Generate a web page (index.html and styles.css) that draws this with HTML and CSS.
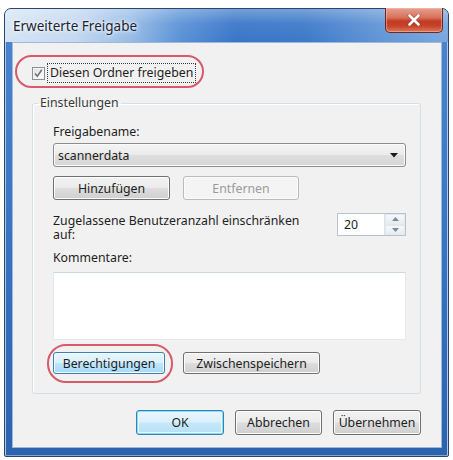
FILE: index.html
```html
<!DOCTYPE html>
<html lang="de">
<head>
<meta charset="utf-8">
<title>Erweiterte Freigabe</title>
<link rel="stylesheet" href="styles.css">
</head>
<body>
<div class="window">
  <div class="titlebar">
    <span class="title">Erweiterte Freigabe</span>
    <button class="close" aria-label="Schließen">
      <svg width="14" height="12" viewBox="0 0 14 12">
        <path d="M2.5 1.5 L11.5 10.5 M11.5 1.5 L2.5 10.5" stroke="#7a2a1e" stroke-width="4" stroke-linecap="round" opacity="0.45"/>
        <path d="M2.5 1.5 L11.5 10.5 M11.5 1.5 L2.5 10.5" stroke="#ffffff" stroke-width="2.6" stroke-linecap="round"/>
      </svg>
    </button>
  </div>
  <div class="client">
    <div class="share-row">
      <span class="checkbox">
        <svg width="11" height="11" viewBox="0 0 11 11">
          <path d="M2 5.5 L4.3 8.2 L8.8 1.8" fill="none" stroke="#6a7486" stroke-width="1.6"/>
        </svg>
      </span>
      <span class="focus">Diesen Ordner freigeben</span>
      <span class="mark mark-share"></span>
    </div>

    <fieldset class="group">
      <legend>Einstellungen</legend>
      <div class="label">Freigabename:</div>
      <div class="combo">
        <span>scannerdata</span>
        <svg class="combo-arrow" width="8" height="5" viewBox="0 0 8 5"><path d="M0 0 H8 L4 4.5 Z" fill="#1a1a1a"/></svg>
      </div>
      <div class="btn-row btn-row-top">
        <button class="btn btn-add">Hinzufügen</button>
        <button class="btn btn-disabled btn-remove" disabled>Entfernen</button>
      </div>
      <div class="limit-row">
        <div class="limit-label">Zugelassene Benutzeranzahl einschränken auf:</div>
        <div class="spin">
          <span class="spin-value">20</span>
          <span class="spin-buttons">
            <span class="spin-btn"><svg width="7" height="4" viewBox="0 0 7 4"><path d="M0 4 L3.5 0 L7 4 Z" fill="#7d8a99"/></svg></span>
            <span class="spin-btn"><svg width="7" height="4" viewBox="0 0 7 4"><path d="M0 0 L3.5 4 L7 0 Z" fill="#7d8a99"/></svg></span>
          </span>
        </div>
      </div>
      <div class="label label-comments">Kommentare:</div>
      <div class="memo"></div>
      <div class="btn-row btn-row-bottom">
        <button class="btn btn-hot btn-perm">Berechtigungen<span class="mark mark-perm"></span></button>
        <button class="btn btn-cache">Zwischenspeichern</button>
      </div>
    </fieldset>

    <div class="actions">
      <button class="btn btn-default btn-ok">OK</button>
      <button class="btn btn-cancel">Abbrechen</button>
      <button class="btn btn-apply">Übernehmen</button>
    </div>
  </div>
</div>
</body>
</html>
```
FILE: styles.css
```css
* { box-sizing: border-box; }

html, body {
  margin: 0;
  padding: 0;
  background: #ffffff;
}

body {
  font-family: "Noto Sans", "Open Sans", sans-serif;
  font-size: 12.3px;
  color: #1e1e1e;
}

.window {
  margin: 8px 0 0 4px;
  width: 445px;
  height: 449px;
  border: 1px solid #2d4566;
  border-radius: 7px 7px 2px 2px;
  background: linear-gradient(180deg, #4c86cf 0%, #3471c0 60%, #2c63ae 100%);
  padding: 0 6px 8px 7px;
  display: flex;
  flex-direction: column;
  box-shadow: inset 1px 0 0 #a9c8ec, inset -1px 0 0 #a9c8ec, inset 0 -1px 0 #7fa6d6;
}

.titlebar {
  height: 33px;
  margin: 0 -6px 0 -7px;
  padding-left: 8px;
  display: flex;
  align-items: flex-start;
  border-radius: 6px 6px 0 0;
  background:
    linear-gradient(180deg, rgba(255,255,255,0.3) 0%, rgba(255,255,255,0.06) 45%, rgba(255,255,255,0) 100%),
    linear-gradient(90deg, #d6e4f4 0%, #c4d8f0 70px, #98bce7 125px, #5a92d6 175px, #3a76c8 230px, #3d79c9 300px, #6497d6 380px, #7aa7de 100%);
}

.title {
  margin-top: 8px;
  font-size: 13.5px;
  line-height: 18px;
  color: #1b2433;
  text-shadow: 0 0 6px #ffffff, 0 0 3px #ffffff;
}

.close {
  margin: -1px 5px 0 auto;
  width: 58px;
  height: 25px;
  padding: 0;
  border: 1px solid #6b2a20;
  border-top: none;
  border-radius: 0 0 5px 5px;
  background: linear-gradient(180deg, #e6a190 0%, #d9705a 40%, #c23b25 55%, #c5432a 75%, #dc7a5a 100%);
  box-shadow: inset 0 0 0 1px rgba(255,200,180,0.45);
  display: flex;
  align-items: center;
  justify-content: center;
}

.client {
  flex: 1;
  background: #f1f1f1;
  border: 1px solid #9fb9da;
  padding: 0 20px 0 19px;
  display: flex;
  flex-direction: column;
}

/* checkbox row */
.share-row {
  position: relative;
  margin-top: 20px;
  height: 20px;
  display: flex;
  align-items: center;
}

.checkbox {
  width: 13px;
  height: 13px;
  border: 1px solid #8e8f8f;
  background: linear-gradient(135deg, #dcdcdc 0%, #f4f4f4 60%, #ffffff 100%);
  box-shadow: inset 0 0 0 1px #f4f4f4;
  display: flex;
  align-items: center;
  justify-content: center;
}

.focus {
  margin-left: 3px;
  padding: 0 2px;
  line-height: 18px;
  outline: 1px dotted #3a3a3a;
  outline-offset: 0;
  white-space: nowrap;
}

.mark {
  position: absolute;
  border: 2px solid #d8596a;
  border-radius: 17px;
  pointer-events: none;
}

.mark-share {
  left: -17px;
  top: -8px;
  width: 189px;
  height: 33px;
}

/* group box */
.group {
  margin: 12px 0 0 0;
  border: 1px solid #d5dfe5;
  border-radius: 3px;
  padding: 13px 14px 19px 20px;
  min-width: 0;
  box-shadow: inset 1px 1px 0 #ffffff;
}

.group legend {
  margin-left: -15px;
  padding: 0 2px;
  line-height: 16px;
  color: #3b3b3b;
}

.label {
  line-height: 16px;
}

.combo {
  margin-top: 3px;
  height: 24px;
  border: 1px solid #8d8d8d;
  border-radius: 3px;
  background: linear-gradient(180deg, #f4f4f4 0%, #ebebeb 48%, #dedede 52%, #d6d6d6 100%);
  box-shadow: inset 0 0 0 1px #fafafa;
  display: flex;
  align-items: center;
  padding: 0 7px 0 4px;
}

.combo span { flex: 1; }

.btn-row {
  display: flex;
}

.btn-row-top {
  margin-top: 9px;
  gap: 13px;
}

.btn {
  font-family: inherit;
  font-size: 12.3px;
  color: #1e1e1e;
  padding: 0;
  border: 1px solid #707070;
  border-radius: 3px;
  background: linear-gradient(180deg, #f2f2f2 0%, #ebebeb 48%, #dddddd 52%, #cfcfcf 100%);
  box-shadow: inset 0 0 0 1px #fcfcfc;
  display: flex;
  align-items: center;
  justify-content: center;
}

.btn-add { width: 117px; height: 24px; }
.btn-remove { width: 116px; height: 24px; }

.btn-disabled {
  color: #9a9a9a;
  border-color: #b8bcbf;
  background: #f4f4f4;
  box-shadow: inset 0 0 0 1px #fbfbfb;
}

.limit-row {
  margin-top: 13px;
  display: flex;
  justify-content: space-between;
  align-items: flex-start;
}

.limit-label {
  width: 256px;
  margin-top: 1px;
  line-height: 14px;
}

.spin {
  width: 69px;
  height: 23px;
  border: 1px solid #b9c3cc;
  background: #ffffff;
  display: flex;
}

.spin-value {
  flex: 1;
  padding-left: 6px;
  line-height: 21px;
}

.spin-buttons {
  width: 21px;
  display: flex;
  flex-direction: column;
  border-left: 1px solid #dce3ea;
}

.spin-btn {
  flex: 1;
  display: flex;
  align-items: center;
  justify-content: center;
  background: linear-gradient(180deg, #f6f8fa 0%, #e7ecf1 100%);
  border: 1px solid #e2e8ee;
}

.label-comments {
  margin-top: 8px;
}

.memo {
  margin-top: 6px;
  height: 68px;
  background: #ffffff;
  border: 1px solid #e3e9ef;
  border-top-color: #cfd6dd;
}

.btn-row-bottom {
  margin-top: 12px;
  gap: 18px;
}

.btn-perm {
  position: relative;
  width: 112px;
  height: 22px;
}

.btn-hot {
  border-color: #3c7fb1;
  background: linear-gradient(180deg, #eaf6fd 0%, #d9f0fc 48%, #bee6fd 52%, #a7d9f5 100%);
  box-shadow: inset 0 0 0 1px #f3fbff;
}

.mark-perm {
  left: -7px;
  top: -9px;
  width: 126px;
  height: 39px;
  border-radius: 19px;
}

.btn-cache {
  width: 137px;
  height: 22px;
}

.actions {
  margin-top: 16px;
  display: flex;
  justify-content: flex-end;
  gap: 11px;
}

.actions .btn {
  width: 88px;
  height: 25px;
}

.btn-default {
  border-color: #3c7fb1;
  background: linear-gradient(180deg, #eaf6fd 0%, #dbf1fc 48%, #c6e8f9 52%, #b7dff3 100%);
  box-shadow: inset 0 0 0 1px #7fdff7, inset 0 0 0 2px #e9f7fe;
}

.btn-cancel { width: 87px !important; }
```
